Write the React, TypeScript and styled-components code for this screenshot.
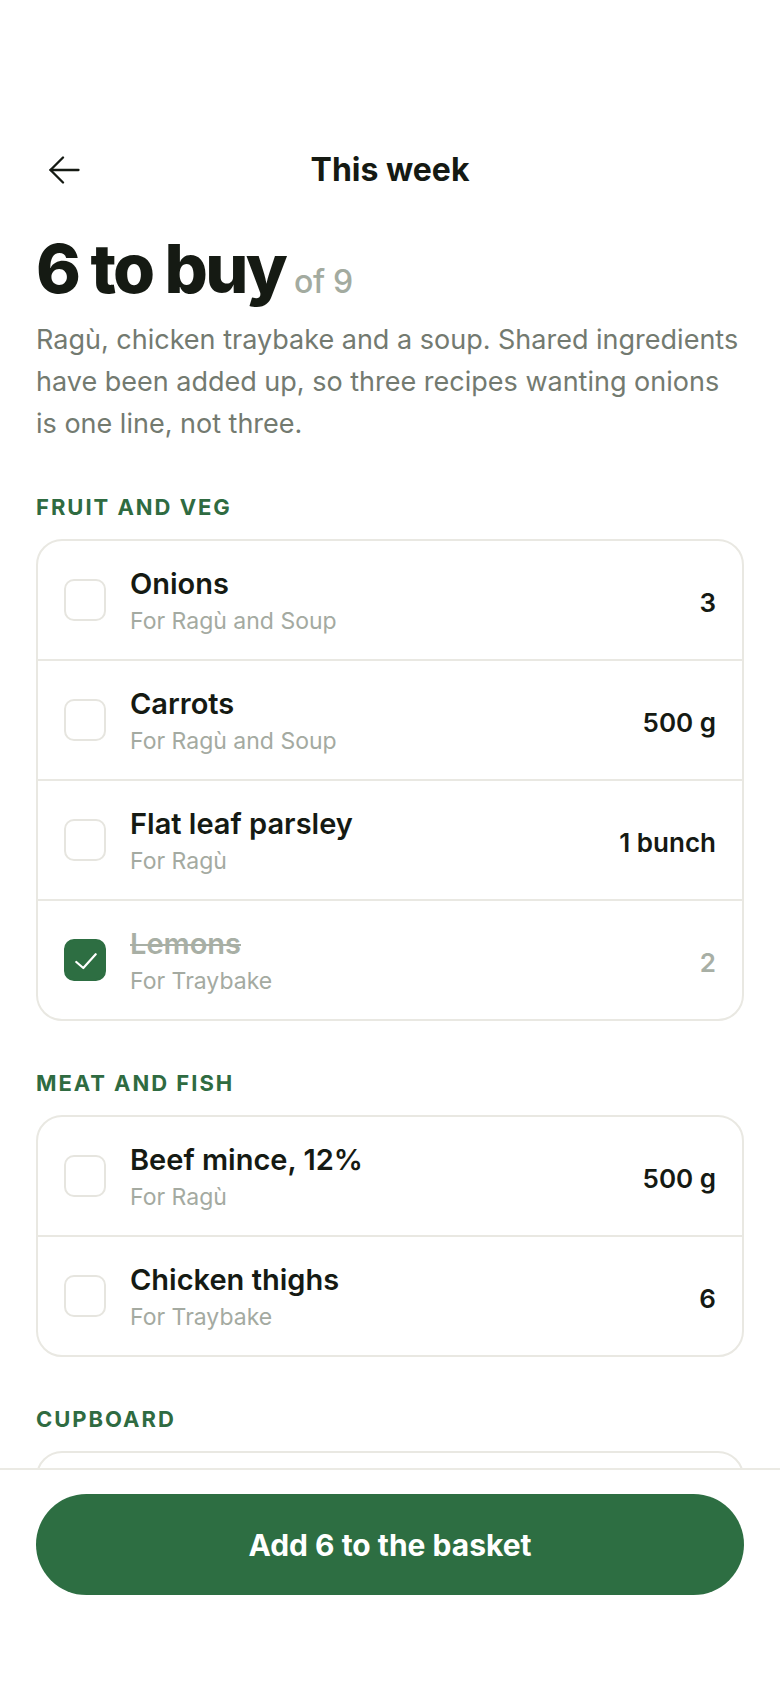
import React, {useState} from 'react';
import styled, {createGlobalStyle} from 'styled-components';


type Item = {
    id: string
    name: string
    note: string
    qty: string
    done: boolean
}

type Group = {
    title: string
    items: Item[]
}


const groups: Group[] = [
    {
        title: 'Fruit and veg',
        items: [
            {id: 'onions', name: 'Onions', note: 'For Ragù and Soup', qty: '3', done: false},
            {id: 'carrots', name: 'Carrots', note: 'For Ragù and Soup', qty: '500 g', done: false},
            {id: 'parsley', name: 'Flat leaf parsley', note: 'For Ragù', qty: '1 bunch', done: false},
            {id: 'lemons', name: 'Lemons', note: 'For Traybake', qty: '2', done: true},
        ]
    },
    {
        title: 'Meat and fish',
        items: [
            {id: 'beef', name: 'Beef mince, 12%', note: 'For Ragù', qty: '500 g', done: false},
            {id: 'chicken', name: 'Chicken thighs', note: 'For Traybake', qty: '6', done: false},
        ]
    },
    {
        title: 'Cupboard',
        items: [
            {id: 'tomatoes', name: 'Chopped tomatoes', note: 'For Ragù and Soup', qty: '3 tins', done: false},
            {id: 'stock', name: 'Chicken stock', note: 'For Soup', qty: '1 l', done: true},
            {id: 'oil', name: 'Olive oil', note: 'For Traybake', qty: '1 bottle', done: true},
        ]
    },
]


const GlobalStyle = createGlobalStyle`
  * {
    box-sizing: border-box;
  }

  body {
    margin: 0;
    background: #ffffff;
    font-family: Inter, "Noto Sans", "Liberation Sans", sans-serif;
    color: #151a13;
    -webkit-font-smoothing: antialiased;
  }
`

const Page = styled.div`
  padding: 130px 36px 260px;
`

const Header = styled.header`
  display: grid;
  grid-template-columns: 1fr auto 1fr;
  align-items: center;
  height: 80px;
`

const BackButton = styled.button`
  display: flex;
  align-items: center;
  justify-content: center;
  width: 56px;
  height: 56px;
  padding: 0;
  border: none;
  background: none;
  color: #151a13;
  cursor: pointer;
`

const HeaderTitle = styled.h1`
  margin: 0;
  font-size: 32px;
  font-weight: 700;
  line-height: 1;
`

const Heading = styled.div`
  display: flex;
  align-items: baseline;
  margin-top: 24px;
`

const BigCount = styled.h2`
  margin: 0;
  font-size: 68px;
  font-weight: 800;
  line-height: 1;
  letter-spacing: -0.04em;
`

const OfTotal = styled.span`
  margin-left: 9px;
  font-size: 32px;
  font-weight: 500;
  color: #a3aba0;
  letter-spacing: -0.01em;
`

const Intro = styled.p`
  margin: 17px 0 2px;
  font-size: 27px;
  line-height: 42px;
  color: #737a70;
`

const Section = styled.section`
  margin-top: 50px;
`

const SectionLabel = styled.h3`
  margin: 0 0 20px;
  font-size: 22px;
  font-weight: 700;
  line-height: 24px;
  letter-spacing: 0.09em;
  text-transform: uppercase;
  color: #2f6b41;
`

const Card = styled.ul`
  margin: 0;
  padding: 0;
  list-style: none;
  border: 2px solid #e9e8e2;
  border-radius: 26px;
  background: #ffffff;
  overflow: hidden;
`

const Row = styled.li`
  display: flex;
  align-items: center;
  gap: 24px;
  height: 120px;
  padding: 0 26px;
  border-bottom: 2px solid #e9e8e2;

  &:last-child {
    height: 118px;
    border-bottom: none;
  }
`

const Box = styled.button<{ $checked: boolean }>`
  display: flex;
  align-items: center;
  justify-content: center;
  flex: none;
  width: 42px;
  height: 42px;
  padding: 0;
  border-radius: 10px;
  border: 2px solid ${p => p.$checked ? '#2d6e42' : '#e6e5df'};
  background: ${p => p.$checked ? '#2d6e42' : '#ffffff'};
  cursor: pointer;
`

const Info = styled.div`
  display: flex;
  flex-direction: column;
  flex: 1;
  min-width: 0;
`

const Name = styled.span<{ $checked: boolean }>`
  font-size: 29px;
  font-weight: 600;
  line-height: 37px;
  color: ${p => p.$checked ? '#a8afa5' : '#151a13'};
  text-decoration: ${p => p.$checked ? 'line-through' : 'none'};
  text-decoration-thickness: 2px;
`

const Note = styled.span`
  margin-top: 4px;
  font-size: 23px;
  line-height: 30px;
  color: #a4aaa1;
`

const Qty = styled.span<{ $checked: boolean }>`
  flex: none;
  padding-top: 4px;
  font-size: 26px;
  font-weight: 600;
  color: ${p => p.$checked ? '#a8afa5' : '#151a13'};
`

const Footer = styled.footer`
  position: fixed;
  left: 0;
  right: 0;
  bottom: 0;
  height: 220px;
  padding: 24px 36px 0;
  background: #ffffff;
  border-top: 2px solid #ebeae4;
`

const BasketButton = styled.button`
  width: 100%;
  height: 101px;
  border: none;
  border-radius: 51px;
  background: #2d6e42;
  color: #ffffff;
  font-family: inherit;
  font-size: 30px;
  font-weight: 700;
  cursor: pointer;
`


const BackArrow = () => (
    <svg width="32" height="28" viewBox="0 0 32 28" fill="none" stroke="currentColor"
         strokeWidth="2.3" strokeLinecap="round" strokeLinejoin="round">
        <path d="M2.5 14H30.5"/>
        <path d="M15 1.5L2.5 14L15 26.5"/>
    </svg>
)

const Tick = () => (
    <svg width="22" height="17" viewBox="0 0 22 17" fill="none" stroke="#ffffff"
         strokeWidth="2.2" strokeLinecap="round" strokeLinejoin="round" style={{marginTop: 3, marginLeft: 2}}>
        <polyline points="1.3,9 8.3,15 20.7,1.2"/>
    </svg>
)


export default function App() {

    const [list, setList] = useState(groups)

    const toggle = (id: string) => {
        setList(list.map(g => ({...g, items: g.items.map(i => i.id === id ? {...i, done: !i.done} : i)})))
    }

    const all = list.flatMap(g => g.items)
    const left = all.filter(i => !i.done).length

    return (
        <>
            <GlobalStyle/>
            <Page>
                <Header>
                    <BackButton aria-label={'Back'}><BackArrow/></BackButton>
                    <HeaderTitle>This week</HeaderTitle>
                    <div/>
                </Header>

                <Heading>
                    <BigCount>{left} to buy</BigCount>
                    <OfTotal>of {all.length}</OfTotal>
                </Heading>
                <Intro>
                    Ragù, chicken traybake and a soup. Shared ingredients have been added up, so three
                    recipes wanting onions is one line, not three.
                </Intro>

                {list.map(g => (
                    <Section key={g.title}>
                        <SectionLabel>{g.title}</SectionLabel>
                        <Card>
                            {g.items.map(i => (
                                <Row key={i.id}>
                                    <Box $checked={i.done} onClick={() => toggle(i.id)} aria-label={i.name}>
                                        {i.done && <Tick/>}
                                    </Box>
                                    <Info>
                                        <Name $checked={i.done}>{i.name}</Name>
                                        <Note>{i.note}</Note>
                                    </Info>
                                    <Qty $checked={i.done}>{i.qty}</Qty>
                                </Row>
                            ))}
                        </Card>
                    </Section>
                ))}
            </Page>

            <Footer>
                <BasketButton>Add {left} to the basket</BasketButton>
            </Footer>
        </>
    )
}
